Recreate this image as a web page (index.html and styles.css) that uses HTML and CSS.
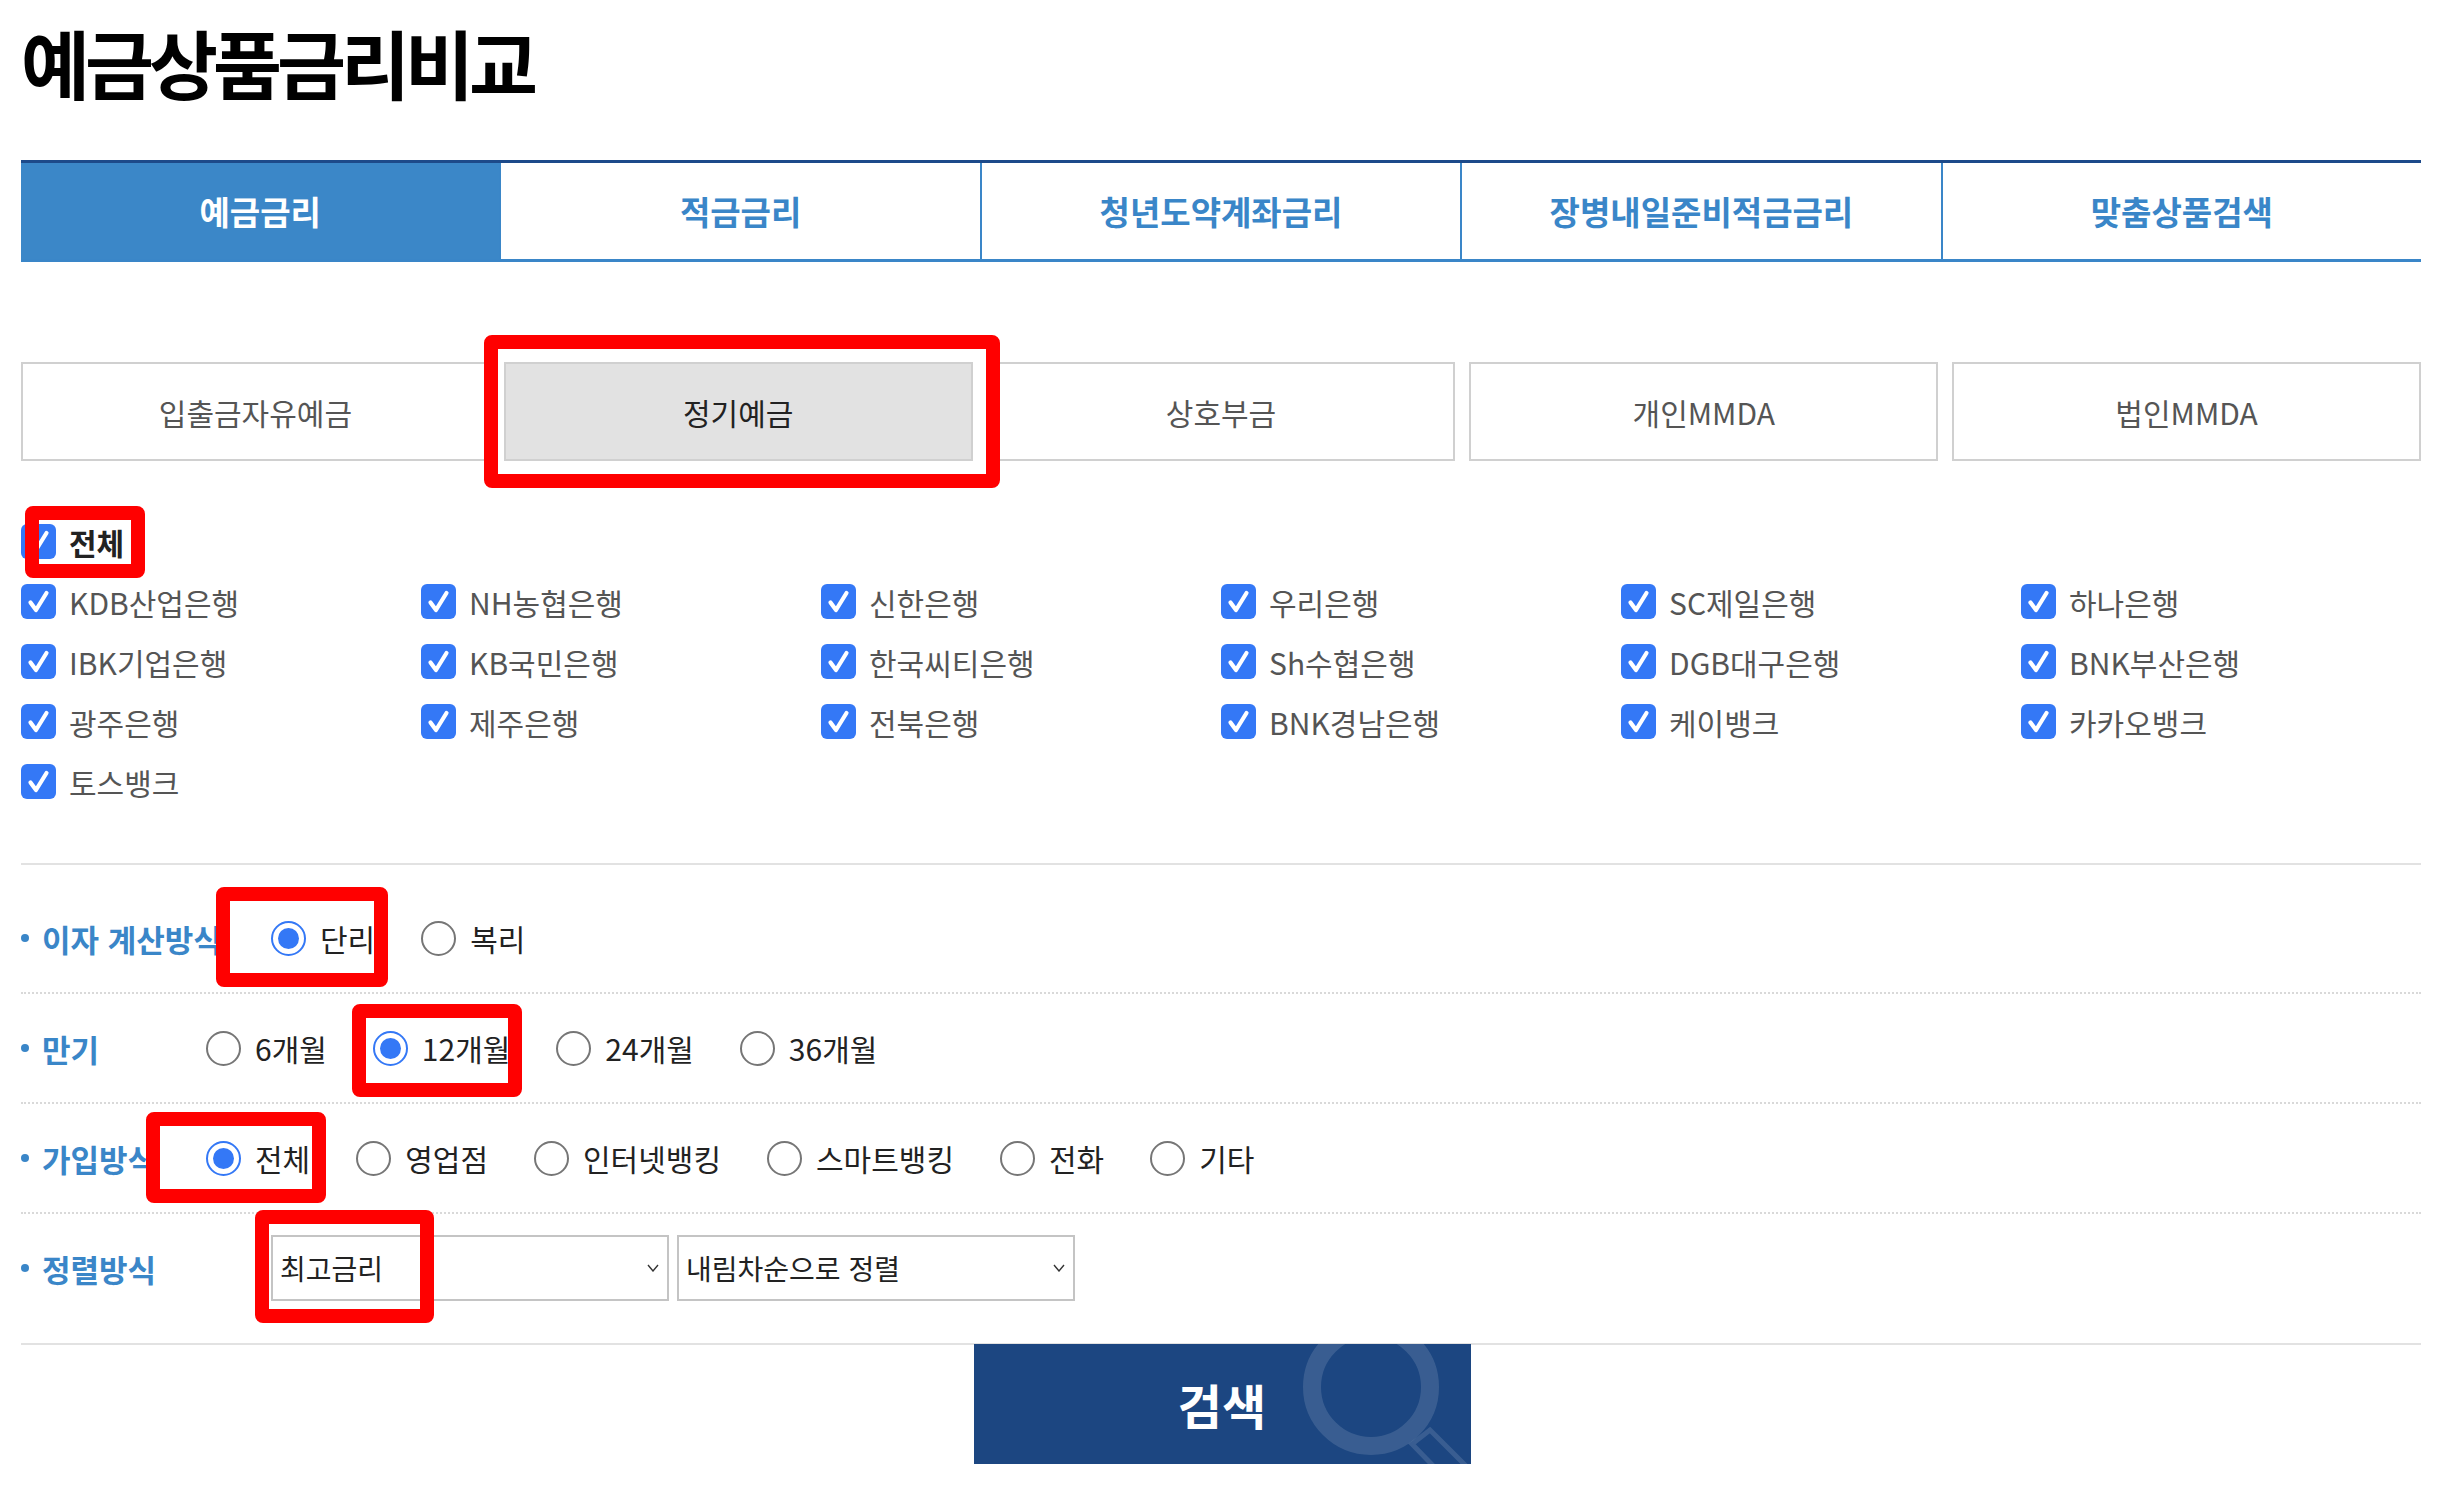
FILE: index.html
```html
<!DOCTYPE html>
<html lang="ko">
<head>
<meta charset="utf-8">
<title>예금상품금리비교</title>
<link rel="stylesheet" href="styles.css">
</head>
<body>
<div class="page">
  <h1 class="title">예금상품금리비교</h1>

  <nav class="tabs">
    <a class="tab active">예금금리</a>
    <a class="tab">적금금리</a>
    <a class="tab">청년도약계좌금리</a>
    <a class="tab">장병내일준비적금금리</a>
    <a class="tab">맞춤상품검색</a>
  </nav>

  <div class="subtabs">
    <div class="subtab">입출금자유예금</div>
    <div class="subtab active">정기예금<span class="mark mark-sub"></span></div>
    <div class="subtab">상호부금</div>
    <div class="subtab">개인MMDA</div>
    <div class="subtab">법인MMDA</div>
  </div>

  <div class="banks">
    <label class="check check-all"><span class="cb"><svg viewBox="0 0 35 35" width="35" height="35"><path d="M9.5 18.5 L15 26 L25.5 9" fill="none" stroke="#fff" stroke-width="4.2" stroke-linecap="round" stroke-linejoin="round"/></svg></span>전체<span class="mark mark-all"></span></label>
    <div class="bank-grid">
      <label class="check"><span class="cb"><svg viewBox="0 0 35 35" width="35" height="35"><path d="M9.5 18.5 L15 26 L25.5 9" fill="none" stroke="#fff" stroke-width="4.2" stroke-linecap="round" stroke-linejoin="round"/></svg></span>KDB산업은행</label>
      <label class="check"><span class="cb"><svg viewBox="0 0 35 35" width="35" height="35"><path d="M9.5 18.5 L15 26 L25.5 9" fill="none" stroke="#fff" stroke-width="4.2" stroke-linecap="round" stroke-linejoin="round"/></svg></span>NH농협은행</label>
      <label class="check"><span class="cb"><svg viewBox="0 0 35 35" width="35" height="35"><path d="M9.5 18.5 L15 26 L25.5 9" fill="none" stroke="#fff" stroke-width="4.2" stroke-linecap="round" stroke-linejoin="round"/></svg></span>신한은행</label>
      <label class="check"><span class="cb"><svg viewBox="0 0 35 35" width="35" height="35"><path d="M9.5 18.5 L15 26 L25.5 9" fill="none" stroke="#fff" stroke-width="4.2" stroke-linecap="round" stroke-linejoin="round"/></svg></span>우리은행</label>
      <label class="check"><span class="cb"><svg viewBox="0 0 35 35" width="35" height="35"><path d="M9.5 18.5 L15 26 L25.5 9" fill="none" stroke="#fff" stroke-width="4.2" stroke-linecap="round" stroke-linejoin="round"/></svg></span>SC제일은행</label>
      <label class="check"><span class="cb"><svg viewBox="0 0 35 35" width="35" height="35"><path d="M9.5 18.5 L15 26 L25.5 9" fill="none" stroke="#fff" stroke-width="4.2" stroke-linecap="round" stroke-linejoin="round"/></svg></span>하나은행</label>
      <label class="check"><span class="cb"><svg viewBox="0 0 35 35" width="35" height="35"><path d="M9.5 18.5 L15 26 L25.5 9" fill="none" stroke="#fff" stroke-width="4.2" stroke-linecap="round" stroke-linejoin="round"/></svg></span>IBK기업은행</label>
      <label class="check"><span class="cb"><svg viewBox="0 0 35 35" width="35" height="35"><path d="M9.5 18.5 L15 26 L25.5 9" fill="none" stroke="#fff" stroke-width="4.2" stroke-linecap="round" stroke-linejoin="round"/></svg></span>KB국민은행</label>
      <label class="check"><span class="cb"><svg viewBox="0 0 35 35" width="35" height="35"><path d="M9.5 18.5 L15 26 L25.5 9" fill="none" stroke="#fff" stroke-width="4.2" stroke-linecap="round" stroke-linejoin="round"/></svg></span>한국씨티은행</label>
      <label class="check"><span class="cb"><svg viewBox="0 0 35 35" width="35" height="35"><path d="M9.5 18.5 L15 26 L25.5 9" fill="none" stroke="#fff" stroke-width="4.2" stroke-linecap="round" stroke-linejoin="round"/></svg></span>Sh수협은행</label>
      <label class="check"><span class="cb"><svg viewBox="0 0 35 35" width="35" height="35"><path d="M9.5 18.5 L15 26 L25.5 9" fill="none" stroke="#fff" stroke-width="4.2" stroke-linecap="round" stroke-linejoin="round"/></svg></span>DGB대구은행</label>
      <label class="check"><span class="cb"><svg viewBox="0 0 35 35" width="35" height="35"><path d="M9.5 18.5 L15 26 L25.5 9" fill="none" stroke="#fff" stroke-width="4.2" stroke-linecap="round" stroke-linejoin="round"/></svg></span>BNK부산은행</label>
      <label class="check"><span class="cb"><svg viewBox="0 0 35 35" width="35" height="35"><path d="M9.5 18.5 L15 26 L25.5 9" fill="none" stroke="#fff" stroke-width="4.2" stroke-linecap="round" stroke-linejoin="round"/></svg></span>광주은행</label>
      <label class="check"><span class="cb"><svg viewBox="0 0 35 35" width="35" height="35"><path d="M9.5 18.5 L15 26 L25.5 9" fill="none" stroke="#fff" stroke-width="4.2" stroke-linecap="round" stroke-linejoin="round"/></svg></span>제주은행</label>
      <label class="check"><span class="cb"><svg viewBox="0 0 35 35" width="35" height="35"><path d="M9.5 18.5 L15 26 L25.5 9" fill="none" stroke="#fff" stroke-width="4.2" stroke-linecap="round" stroke-linejoin="round"/></svg></span>전북은행</label>
      <label class="check"><span class="cb"><svg viewBox="0 0 35 35" width="35" height="35"><path d="M9.5 18.5 L15 26 L25.5 9" fill="none" stroke="#fff" stroke-width="4.2" stroke-linecap="round" stroke-linejoin="round"/></svg></span>BNK경남은행</label>
      <label class="check"><span class="cb"><svg viewBox="0 0 35 35" width="35" height="35"><path d="M9.5 18.5 L15 26 L25.5 9" fill="none" stroke="#fff" stroke-width="4.2" stroke-linecap="round" stroke-linejoin="round"/></svg></span>케이뱅크</label>
      <label class="check"><span class="cb"><svg viewBox="0 0 35 35" width="35" height="35"><path d="M9.5 18.5 L15 26 L25.5 9" fill="none" stroke="#fff" stroke-width="4.2" stroke-linecap="round" stroke-linejoin="round"/></svg></span>카카오뱅크</label>
      <label class="check"><span class="cb"><svg viewBox="0 0 35 35" width="35" height="35"><path d="M9.5 18.5 L15 26 L25.5 9" fill="none" stroke="#fff" stroke-width="4.2" stroke-linecap="round" stroke-linejoin="round"/></svg></span>토스뱅크</label>
    </div>
  </div>

  <div class="options">
    <div class="orow">
      <div class="olabel wide">이자 계산방식</div>
      <div class="opts">
        <label class="opt"><span class="radio on"></span>단리<span class="mark mark-simple"></span></label>
        <label class="opt"><span class="radio"></span>복리</label>
      </div>
    </div>
    <div class="orow">
      <div class="olabel">만기</div>
      <div class="opts">
        <label class="opt"><span class="radio"></span>6개월</label>
        <label class="opt"><span class="radio on"></span>12개월<span class="mark mark-term"></span></label>
        <label class="opt"><span class="radio"></span>24개월</label>
        <label class="opt"><span class="radio"></span>36개월</label>
      </div>
    </div>
    <div class="orow">
      <div class="olabel">가입방식</div>
      <div class="opts">
        <label class="opt"><span class="radio on"></span>전체<span class="mark mark-join"></span></label>
        <label class="opt"><span class="radio"></span>영업점</label>
        <label class="opt"><span class="radio"></span>인터넷뱅킹</label>
        <label class="opt"><span class="radio"></span>스마트뱅킹</label>
        <label class="opt"><span class="radio"></span>전화</label>
        <label class="opt"><span class="radio"></span>기타</label>
      </div>
    </div>
    <div class="orow last">
      <div class="olabel wide">정렬방식</div>
      <div class="selects">
        <div class="select"><span>최고금리</span><svg width="12" height="8" viewBox="0 0 12 8"><polyline points="1,1 6,7 11,1" fill="none" stroke="#333" stroke-width="1.4"/></svg><span class="mark mark-sort"></span></div>
        <div class="select"><span>내림차순으로 정렬</span><svg width="12" height="8" viewBox="0 0 12 8"><polyline points="1,1 6,7 11,1" fill="none" stroke="#333" stroke-width="1.4"/></svg></div>
      </div>
    </div>
  </div>

  <div class="actions">
    <button class="search" type="button">
      <svg class="deco" width="497" height="120" viewBox="0 0 497 120"><circle cx="397" cy="43" r="59" fill="none" stroke="rgba(255,255,255,0.13)" stroke-width="18"/><polygon points="438,100 456,86 520,150 502,166" fill="none" stroke="rgba(255,255,255,0.13)" stroke-width="5"/></svg>
      <span class="search-text">검색</span>
    </button>
  </div>
</div>
</body>
</html>
```
FILE: styles.css
```css
* { box-sizing: border-box; }
body {
  margin: 0;
  background: #fff;
  font-family: "Noto Sans CJK KR", "Noto Sans", sans-serif;
  color: #222;
}
.page {
  width: 2400px;
  margin-left: 21px;
}
.title {
  margin: 17px 0 0 0;
  font-size: 75px;
  line-height: 90px;
  font-weight: 700;
  letter-spacing: -5px;
  color: #000;
}

/* main tabs */
.tabs {
  display: flex;
  margin-top: 53px;
  border-top: 3px solid #1d4a8a;
}
.tab {
  flex: 1;
  height: 99px;
  display: flex;
  align-items: center;
  justify-content: center;
  font-size: 33px;
  font-weight: 700;
  color: #3a86c8;
  border-bottom: 3px solid #3a86c8;
  border-left: 2px solid #3a86c8;
  text-decoration: none;
}
.tab:first-child { border-left: 0; }
.tab.active { background: #3b87c8; color: #fff; }

/* sub tabs */
.subtabs {
  display: flex;
  gap: 14px;
  margin-top: 100px;
}
.subtab {
  position: relative;
  flex: 1;
  height: 99px;
  border: 2px solid #d0d0d0;
  display: flex;
  align-items: center;
  justify-content: center;
  font-size: 30px;
  color: #555;
}
.subtab.active { background: #e2e2e2; color: #222; }

/* red annotation marks */
.mark {
  position: absolute;
  z-index: 5;
  border: 14px solid #ff0000;
  border-radius: 8px;
  pointer-events: none;
}
.mark-sub { top: -29px; bottom: -29px; left: -22px; right: -29px; }
.mark-all { top: -18px; bottom: -19px; left: 4px; right: -21px; }
.mark-simple { top: -33px; bottom: -31px; left: -55px; right: -13px; }
.mark-term { top: -26px; bottom: -31px; left: -21px; right: -12px; }
.mark-join { top: -28px; bottom: -27px; left: -60px; right: -16px; }
.mark-sort { top: -27px; bottom: -24px; left: -18px; right: 233px; }

/* banks */
.banks {
  margin-top: 63px;
  padding-bottom: 64px;
}
.check {
  position: relative;
  display: flex;
  align-items: center;
  gap: 13px;
  height: 35px;
  font-size: 30px;
  color: #555;
  white-space: nowrap;
}
.check-all {
  display: inline-flex;
  font-weight: 700;
  font-size: 30px;
  color: #222;
  margin-bottom: 25px;
}
.cb {
  flex: none;
  width: 35px;
  height: 35px;
  border-radius: 6px;
  background: #3478f6;
  display: flex;
}
.bank-grid {
  display: grid;
  grid-template-columns: repeat(6, 400px);
  row-gap: 25px;
}

/* options */
.options {
  border-top: 2px solid #e2e2e2;
  border-bottom: 2px solid #e2e2e2;
  padding: 19px 0 21px;
}
.orow {
  display: flex;
  align-items: center;
  height: 110px;
  border-bottom: 2px dotted #d9d9d9;
}
.orow.last { height: 108px; border-bottom: 0; }
.olabel {
  flex: 0 0 185px;
  display: flex;
  align-items: center;
  gap: 13px;
  font-size: 31px;
  font-weight: 700;
  color: #3a86c8;
  white-space: nowrap;
}
.olabel::before {
  content: "";
  width: 8px;
  height: 8px;
  border-radius: 50%;
  background: #3a86c8;
  flex: none;
}
.olabel.wide { flex-basis: 250px; }
.opts {
  display: flex;
  gap: 46px;
}
.opt {
  position: relative;
  display: flex;
  align-items: center;
  gap: 14px;
  height: 36px;
  font-size: 30px;
  color: #222;
  white-space: nowrap;
}
.radio {
  flex: none;
  width: 35px;
  height: 35px;
  border-radius: 50%;
  border: 2px solid #767676;
  background: #fff;
  display: flex;
  align-items: center;
  justify-content: center;
}
.radio.on { border-color: #3478f6; }
.radio.on::after {
  content: "";
  width: 21px;
  height: 21px;
  border-radius: 50%;
  background: #3478f6;
}
.selects {
  display: flex;
  gap: 8px;
}
.select {
  position: relative;
  width: 398px;
  height: 66px;
  border: 2px solid #c4c4c4;
  display: flex;
  align-items: center;
  justify-content: space-between;
  padding: 0 8px 0 7px;
  font-size: 28px;
  color: #222;
}

/* search */
.actions {
  display: flex;
  justify-content: center;
  margin-top: -1px;
}
.search {
  position: relative;
  overflow: hidden;
  width: 497px;
  height: 120px;
  border: 0;
  margin: 0 0 0 2px;
  padding: 0;
  background: #1c4681;
  color: #fff;
  font-family: inherit;
  font-size: 48px;
  font-weight: 700;
  display: flex;
  align-items: center;
  justify-content: center;
}
.deco {
  position: absolute;
  left: 0;
  top: 0;
}
.search-text { position: relative; }
```
